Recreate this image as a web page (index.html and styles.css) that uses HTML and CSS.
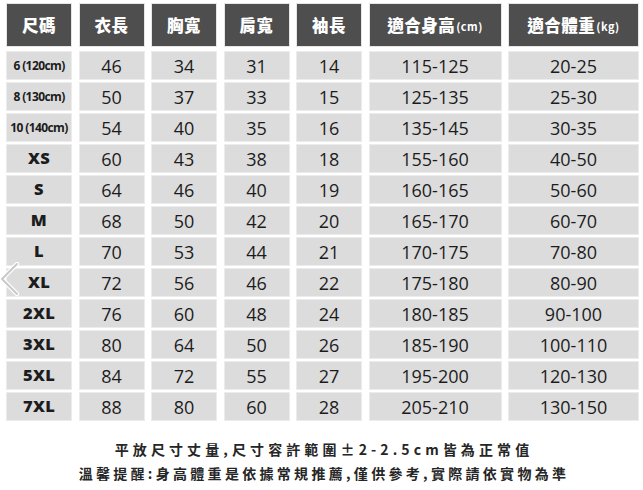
FILE: index.html
```html
<!DOCTYPE html>
<html lang="zh-Hant">
<head>
<meta charset="utf-8">
<title>尺碼表</title>
<link rel="stylesheet" href="styles.css">
</head>
<body>
<div class="page">
  <div class="chart">
    <div class="hd">尺碼</div>
    <div class="hd">衣長</div>
    <div class="hd">胸寬</div>
    <div class="hd">肩寬</div>
    <div class="hd">袖長</div>
    <div class="hd">適合身高<span class="unit">(cm)</span></div>
    <div class="hd">適合體重<span class="unit">(kg)</span></div>

    <div class="c sz small">6 (120cm)</div><div class="c">46</div><div class="c">34</div><div class="c">31</div><div class="c">14</div><div class="c">115-125</div><div class="c">20-25</div>
    <div class="c sz small">8 (130cm)</div><div class="c">50</div><div class="c">37</div><div class="c">33</div><div class="c">15</div><div class="c">125-135</div><div class="c">25-30</div>
    <div class="c sz small">10 (140cm)</div><div class="c">54</div><div class="c">40</div><div class="c">35</div><div class="c">16</div><div class="c">135-145</div><div class="c">30-35</div>
    <div class="c sz">XS</div><div class="c">60</div><div class="c">43</div><div class="c">38</div><div class="c">18</div><div class="c">155-160</div><div class="c">40-50</div>
    <div class="c sz">S</div><div class="c">64</div><div class="c">46</div><div class="c">40</div><div class="c">19</div><div class="c">160-165</div><div class="c">50-60</div>
    <div class="c sz">M</div><div class="c">68</div><div class="c">50</div><div class="c">42</div><div class="c">20</div><div class="c">165-170</div><div class="c">60-70</div>
    <div class="c sz">L</div><div class="c">70</div><div class="c">53</div><div class="c">44</div><div class="c">21</div><div class="c">170-175</div><div class="c">70-80</div>
    <div class="c sz">XL</div><div class="c">72</div><div class="c">56</div><div class="c">46</div><div class="c">22</div><div class="c">175-180</div><div class="c">80-90</div>
    <div class="c sz">2XL</div><div class="c">76</div><div class="c">60</div><div class="c">48</div><div class="c">24</div><div class="c">180-185</div><div class="c">90-100</div>
    <div class="c sz">3XL</div><div class="c">80</div><div class="c">64</div><div class="c">50</div><div class="c">26</div><div class="c">185-190</div><div class="c">100-110</div>
    <div class="c sz">5XL</div><div class="c">84</div><div class="c">72</div><div class="c">55</div><div class="c">27</div><div class="c">195-200</div><div class="c">120-130</div>
    <div class="c sz">7XL</div><div class="c">88</div><div class="c">80</div><div class="c">60</div><div class="c">28</div><div class="c">205-210</div><div class="c">130-150</div>
  </div>
  <div class="notes">
    <p>平放尺寸丈量,尺寸容許範圍±2-2.5cm皆為正常值</p>
    <p class="tip">溫馨提醒:身高體重是依據常規推薦,僅供參考,實際請依實物為準</p>
  </div>
  <svg class="prev" width="22" height="36" viewBox="0 0 22 36" aria-hidden="true">
    <polyline points="18,2 3,17 18,32" fill="none" stroke="#ffffff" stroke-width="4.5" stroke-linecap="round" stroke-linejoin="round"/>
    <polyline points="18,2 3,17 18,32" fill="none" stroke="#c9c9c9" stroke-width="2" stroke-linecap="round" stroke-linejoin="round"/>
  </svg>
</div>
</body>
</html>
```
FILE: styles.css
```css
html, body {
  margin: 0;
  padding: 0;
  background: #ffffff;
}

.page {
  position: relative;
  width: 643px;
  height: 490px;
  padding: 4px 6px 0 7px;
  box-sizing: border-box;
  font-family: "Open Sans", "Noto Sans CJK TC", sans-serif;
  color: #1c1c1c;
}

.chart {
  display: grid;
  grid-template-columns: 64px 64px 64px 64px 64px 131px 129px;
  grid-template-rows: 44px repeat(12, 27px);
  column-gap: 8.5px;
  row-gap: 4px;
}

.hd {
  background: #4e4e4e;
  color: #ffffff;
  font-family: "Noto Sans CJK TC", sans-serif;
  font-weight: 900;
  font-size: 16.5px;
  letter-spacing: 0.5px;
  display: flex;
  align-items: center;
  justify-content: center;
  margin-bottom: 2px;
  box-shadow: 0 0 0 1px #e6e6e6;
}

.hd .unit {
  font-size: 11px;
  font-weight: 700;
  letter-spacing: 0.5px;
  margin-left: 1px;
  padding-top: 2px;
}

.c {
  background: #dcdcdc;
  display: flex;
  align-items: center;
  justify-content: center;
  font-size: 18px;
  line-height: 1;
  box-shadow: 0 0 0 1px #ececec;
}

.sz {
  font-weight: 800;
  font-size: 16.5px;
  letter-spacing: 0.3px;
}

.sz.small {
  font-size: 12px;
  font-weight: 700;
  letter-spacing: -0.6px;
}

.notes {
  margin-top: 17px;
  text-align: center;
  font-family: "Noto Sans CJK TC", sans-serif;
  font-weight: 700;
  font-size: 14px;
  letter-spacing: 4.1px;
  line-height: 24px;
  color: #262626;
  padding-left: 4px;
}

.notes p {
  margin: 0;
}

.notes .tip {
  letter-spacing: 3.3px;
}

.prev {
  position: absolute;
  left: -1px;
  top: 262px;
}
```
